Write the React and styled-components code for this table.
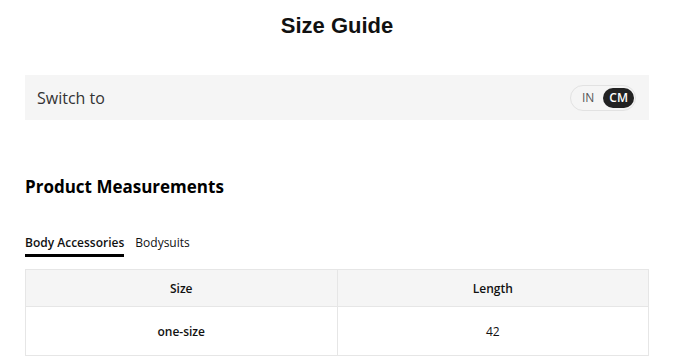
import React, { useState } from 'react';
import styled, { createGlobalStyle } from 'styled-components';

const GlobalStyle = createGlobalStyle`
    body{
        margin: 0;
        background: #fff;
        font-family: "Open Sans", "Noto Sans", sans-serif;
        color: #111;
    }
`;

const Page = styled.div`
    padding: 12px 28px 0 25px;
`;

const Title = styled.h1`
    margin: 0;
    font-family: "Liberation Sans", Arial, sans-serif;
    font-size: 22px;
    font-weight: 700;
    text-align: center;
    line-height: 28px;
    color: #111;
`;

const SwitchBar = styled.div`
    margin-top: 35px;
    height: 45px;
    background: #f5f5f5;
    display: flex;
    align-items: center;
    justify-content: space-between;
    padding: 0 13px 0 12px;
    font-size: 16px;
    color: #333;
`;

const Toggle = styled.div`
    display: flex;
    align-items: center;
    border: 1px solid #e2e2e2;
    border-radius: 14px;
    padding: 2px 1px 2px 4px;
    gap: 2px;
`;

const ToggleOption = styled.button`
    border: 0;
    border-radius: 11px;
    padding: 0 ${p => p.$active ? 6 : 7}px;
    height: 20px;
    font-family: inherit;
    font-size: 12px;
    cursor: pointer;
    background: ${p => p.$active ? '#222' : 'transparent'};
    color: ${p => p.$active ? '#fff' : '#555'};
    font-weight: ${p => p.$active ? 600 : 400};
`;

const SectionTitle = styled.h2`
    margin: 56px 0 0 0;
    font-size: 17px;
    font-weight: 700;
    line-height: 22px;
    color: #000;
`;

const Tabs = styled.div`
    margin-top: 36px;
    display: flex;
    gap: 11px;
`;

const Tab = styled.button`
    border: 0;
    background: none;
    padding: 0 0 3px 0;
    font-family: inherit;
    font-size: 12px;
    color: #111;
    font-weight: ${p => p.$active ? 600 : 400};
    border-bottom: 3px solid ${p => p.$active ? '#000' : 'transparent'};
    cursor: pointer;
`;

const Table = styled.table`
    margin-top: 12px;
    width: 100%;
    border-collapse: collapse;
    font-size: 12px;
    th, td{
        border: 1px solid #e6e6e6;
        text-align: center;
        width: 50%;
        padding: 0;
    }
    th{
        background: #f5f5f5;
        font-weight: 600;
        height: 36px;
    }
    td{
        height: 48px;
    }
`;

const Cell = styled.td`
    font-weight: ${p => p.$bold ? 600 : 400};
`;

const App = () => {
    const [unit, setUnit] = useState('CM');
    const [tab, setTab] = useState('Body Accessories');

    return (
        <Page>
            <GlobalStyle />
            <Title>Size Guide</Title>

            <SwitchBar>
                <span>Switch to</span>
                <Toggle>
                    {['IN', 'CM'].map(u =>
                        <ToggleOption key={u} $active={unit === u} onClick={() => setUnit(u)}>{u}</ToggleOption>
                    )}
                </Toggle>
            </SwitchBar>

            <SectionTitle>Product Measurements</SectionTitle>

            <Tabs>
                {['Body Accessories', 'Bodysuits'].map(t =>
                    <Tab key={t} $active={tab === t} onClick={() => setTab(t)}>{t}</Tab>
                )}
            </Tabs>

            <Table>
                <thead>
                    <tr><th>Size</th><th>Length</th></tr>
                </thead>
                <tbody>
                    <tr><Cell $bold>one-size</Cell><Cell>42</Cell></tr>
                </tbody>
            </Table>
        </Page>
    )
}

export default App;
